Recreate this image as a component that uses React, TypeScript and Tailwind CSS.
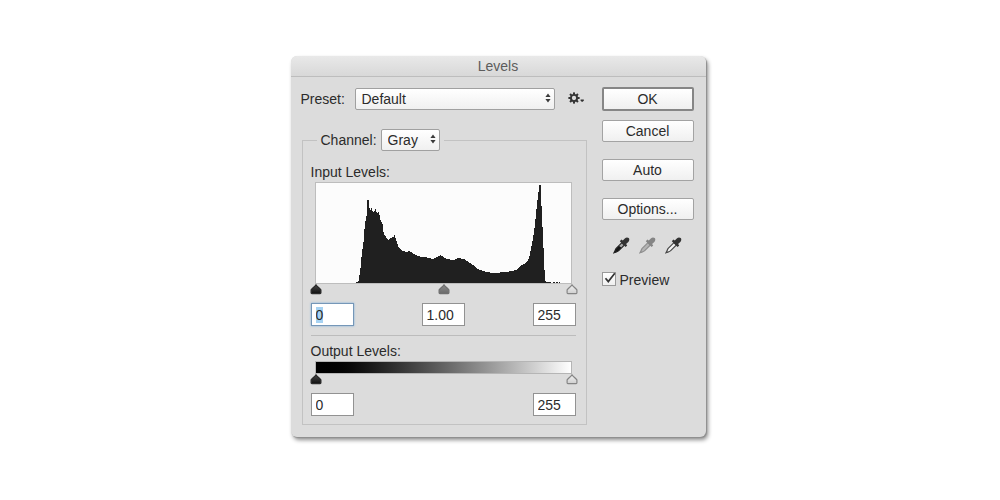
import { useEffect, useRef, useState } from 'react'
import type { ReactNode, RefObject } from 'react'
import clsx from 'clsx'

const PRESETS = ['Default', 'Darker', 'Increase Contrast 1', 'Lighten Shadows', 'Custom']
const CHANNELS = ['Gray']

// [level, height] pairs, joined by straight lines
const HISTOGRAM: Array<[number, number]> = [
  [40, 1], [42, 1], [43, 3], [45, 17], [46, 30], [48, 43], [49, 58], [51, 68], [51, 83], [53, 83],
  [53, 76], [55, 73], [56, 76], [57, 70], [59, 72], [60, 75], [61, 69], [63, 71], [65, 62],
  [67, 59], [68, 49], [71, 45], [73, 43], [75, 45], [78, 46], [79, 48], [81, 41], [83, 36], [87, 32],
  [91, 31], [94, 32], [97, 30], [102, 27], [106, 26], [110, 26], [117, 24], [122, 26], [125, 28],
  [131, 24], [139, 23], [143, 25], [149, 24], [153, 21], [159, 17], [162, 14], [171, 11],
  [178, 10], [191, 11], [201, 13], [205, 17], [212, 21], [214, 25], [216, 35], [218, 45],
  [220, 60], [222, 80], [223, 88], [224, 95], [224, 98], [226, 98], [226, 86], [227, 63], [228, 45],
  [229, 20], [230, 3], [231, 1], [236, 1],
]

type Tone = 'black' | 'gray' | 'white'

const THUMB: Record<Tone, { from: string; to: string; stroke: string }> = {
  black: { from: '#4a4a4a', to: '#101010', stroke: '#2a2a2a' },
  gray: { from: '#8c8c8c', to: '#6a6a6a', stroke: '#6f6f6f' },
  white: { from: '#f2f2f2', to: '#cfcfcf', stroke: '#858585' },
}

export default function App() {
  const [preset, setPreset] = useState('Default')
  const [channel, setChannel] = useState('Gray')
  const [shadows, setShadows] = useState('0')
  const [gamma, setGamma] = useState('1.00')
  const [highlights, setHighlights] = useState('255')
  const [outBlack, setOutBlack] = useState('0')
  const [outWhite, setOutWhite] = useState('255')
  const [preview, setPreview] = useState(true)
  const firstField = useRef<HTMLInputElement>(null)

  useEffect(() => {
    firstField.current?.focus()
    firstField.current?.select()
  }, [])

  return (
    <main className="flex min-h-screen items-start justify-center bg-white pt-14 pr-1 pb-14 font-['Liberation_Sans',Arial,sans-serif] text-sm leading-4 text-[#2b2b2b]">
      <form
        role="dialog"
        aria-labelledby="levels-title"
        onSubmit={(e) => e.preventDefault()}
        className="w-full max-w-[415px] rounded-md bg-[#dcdcdc] shadow-[1px_1px_1px_#8f8f8f,2px_3px_4px_rgba(0,0,0,0.45)]"
      >
        <header className="rounded-t-md border-b border-[#bdbdbd] bg-linear-to-b from-[#e9e9e9] to-[#d8d8d8] pt-0.5 pb-0.5">
          <h1 id="levels-title" className="text-center text-[#5c5c5c]">Levels</h1>
        </header>

        <div className="flex gap-[15px] pt-2.5 pr-3 pb-3 pl-2.5">
          <div className="min-w-0 flex-1">
            <div className="flex items-center pt-px">
              <label htmlFor="preset" className="w-[54px]">Preset:</label>
              <Dropdown id="preset" value={preset} options={PRESETS} onChange={setPreset} className="flex-1" />
              <button type="button" aria-label="Preset options" className="mr-0.5 ml-3">
                <GearIcon />
              </button>
            </div>

            <fieldset className="mt-[19px] ml-px border border-[#c2c2c2] pr-2.5 pb-2 pl-2">
              <legend className="ml-1.5 flex items-center gap-1 pr-1 pl-1">
                <label htmlFor="channel">Channel:</label>
                <Dropdown id="channel" value={channel} options={CHANNELS} onChange={setChannel} className="w-[59px]" />
              </legend>

              <h2 className="mt-[13px]">Input Levels:</h2>
              <div className="mt-0.5 mr-1 ml-1">
                <Histogram />
                <Slider
                  handles={[
                    { tone: 'black', label: 'Shadows', min: 0, max: 255, value: shadows, set: setShadows },
                    { tone: 'gray', label: 'Midtones', min: 0, max: 2, value: gamma, set: setGamma },
                    { tone: 'white', label: 'Highlights', min: 0, max: 255, value: highlights, set: setHighlights },
                  ]}
                />
              </div>
              <div className="mt-2 flex justify-between">
                <LevelField label="Shadow input level" value={shadows} onChange={setShadows} inputRef={firstField} />
                <LevelField label="Midtone input level" value={gamma} onChange={setGamma} />
                <LevelField label="Highlight input level" value={highlights} onChange={setHighlights} />
              </div>

              <hr className="mt-[9px] border-[#bcbcbc]" />

              <h2 className="mt-[7px]">Output Levels:</h2>
              <div className="mt-0.5 mr-1 ml-1">
                <div className="h-[13px] border border-[#b5b5b5] bg-linear-to-r from-black to-white" />
                <Slider
                  handles={[
                    { tone: 'black', label: 'Output black', min: 0, max: 255, value: outBlack, set: setOutBlack },
                    { tone: 'white', label: 'Output white', min: 0, max: 255, value: outWhite, set: setOutWhite },
                  ]}
                />
              </div>
              <div className="mt-2 flex justify-between">
                <LevelField label="Black output level" value={outBlack} onChange={setOutBlack} />
                <LevelField label="White output level" value={outWhite} onChange={setOutWhite} />
              </div>
            </fieldset>
          </div>

          <div className="flex w-[92px] flex-col">
            <DialogButton primary>OK</DialogButton>
            <DialogButton className="mt-[9px]">Cancel</DialogButton>
            <DialogButton className="mt-[17px]">Auto</DialogButton>
            <DialogButton className="mt-[17px]">Options...</DialogButton>

            <div className="mt-[17px] flex justify-between pr-3 pl-[11px]">
              <button type="button" aria-label="Set black point"><Dropper tone="black" /></button>
              <button type="button" aria-label="Set gray point"><Dropper tone="gray" /></button>
              <button type="button" aria-label="Set white point"><Dropper tone="white" /></button>
            </div>

            <label className="mt-[18px] flex items-start gap-1">
              <span className="relative size-[14px] shrink-0">
                <input
                  type="checkbox"
                  checked={preview}
                  onChange={(e) => setPreview(e.target.checked)}
                  className="block size-[14px] appearance-none border border-[#9a9a9a] bg-linear-to-b from-white to-[#efefef]"
                />
                {preview && (
                  <svg viewBox="0 0 14 14" className="pointer-events-none absolute inset-0 size-[14px] overflow-visible" fill="none">
                    <path d="M3.5 6.2 6.3 9.6 12.8 1.2" stroke="#333" strokeWidth="1.7" />
                  </svg>
                )}
              </span>
              Preview
            </label>
          </div>
        </div>
      </form>
    </main>
  )
}

function Dropdown({
  id,
  value,
  options,
  onChange,
  className,
}: {
  id: string
  value: string
  options: string[]
  onChange: (v: string) => void
  className?: string
}) {
  return (
    <div className={clsx('relative', className)}>
      <select
        id={id}
        value={value}
        onChange={(e) => onChange(e.target.value)}
        className="block h-[22px] w-full appearance-none rounded-xs border border-[#a0a0a0] bg-linear-to-b from-white to-[#f0f0f0] pl-1.5 leading-4"
      >
        {options.map((o) => <option key={o}>{o}</option>)}
      </select>
      <svg viewBox="0 0 6 10" className="pointer-events-none absolute top-[5px] right-1 h-2.5 w-1.5" fill="#3a3a3a">
        <path d="M3 .5 5.6 4H.4zM3 9.5.4 6h5.2z" />
      </svg>
    </div>
  )
}

function DialogButton({ primary, className, children }: { primary?: boolean; className?: string; children: ReactNode }) {
  return (
    <button
      type={primary ? 'submit' : 'button'}
      className={clsx(
        'w-full rounded-xs bg-linear-to-b from-white to-[#f0f0f0]',
        primary ? 'h-6 border-2 border-[#868686]' : 'h-[22px] border border-[#a3a3a3]',
        className
      )}
    >
      {children}
    </button>
  )
}

function LevelField({
  label,
  value,
  onChange,
  inputRef,
}: {
  label: string
  value: string
  onChange: (v: string) => void
  inputRef?: RefObject<HTMLInputElement | null>
}) {
  return (
    <input
      ref={inputRef}
      type="text"
      aria-label={label}
      value={value}
      onChange={(e) => onChange(e.target.value)}
      className="h-[23px] w-[43px] border border-[#929292] bg-white pl-1 outline-none selection:bg-[#a6d2f2] selection:text-[#2b2b2b] focus:border-[#7597b8] focus:shadow-[0_0_2px_#7fb0dc]"
    />
  )
}

type Handle = {
  tone: Tone
  label: string
  min: number
  max: number
  value: string
  set: (v: string) => void
}

function Slider({ handles }: { handles: Handle[] }) {
  return (
    <div className="relative ml-px h-[11px]">
      {handles.map((h) => (
        <div key={h.label}>
          <input
            type="range"
            aria-label={h.label}
            min={h.min}
            max={h.max}
            step={h.max === 2 ? 0.01 : 1}
            value={h.value}
            onChange={(e) => h.set(e.target.value)}
            className="pointer-events-none absolute inset-0 w-full opacity-0 [&::-webkit-slider-thumb]:pointer-events-auto"
          />
          <span
            className="pointer-events-none absolute top-0 -translate-x-1/2"
            style={{ left: `${((Number(h.value) - h.min) / (h.max - h.min)) * 100}%` }}
          >
            <Thumb tone={h.tone} />
          </span>
        </div>
      ))}
    </div>
  )
}

function Thumb({ tone }: { tone: Tone }) {
  const t = THUMB[tone]
  return (
    <svg viewBox="0 0 12 11" className="block h-[11px] w-3">
      <defs>
        <linearGradient id={`thumb-${tone}`} x1="0" y1="0" x2="0" y2="1">
          <stop offset="0" stopColor={t.from} />
          <stop offset="1" stopColor={t.to} />
        </linearGradient>
      </defs>
      <path
        d="M6 .8C7.2 2.4 9.6 4.4 10.9 5.9V8.8Q10.9 9.6 10.1 9.6H1.9Q1.1 9.6 1.1 8.8V5.9C2.4 4.4 4.8 2.4 6 .8Z"
        fill={`url(#thumb-${tone})`}
        stroke={t.stroke}
        strokeWidth="1.2"
      />
    </svg>
  )
}

function Histogram() {
  const points = HISTOGRAM.map(([x, h]) => `${x},${100 - h}`).join(' ')
  return (
    <div className="border border-[#bdbdbd] bg-[#fcfcfc]">
      <svg viewBox="0 0 256 100" preserveAspectRatio="none" className="block h-[100px] w-full" shapeRendering="crispEdges" fill="#202020">
        <polygon points={`40,100 ${points} 236,100`} />
        <path d="M238 99h2v1h-2zM241 99h2v1h-2zM244 99h1v1h-1z" />
      </svg>
    </div>
  )
}

function GearIcon() {
  const teeth = [0, 45, 90, 135, 180, 225, 270, 315]
  return (
    <svg viewBox="0 0 18 14" className="block h-3.5 w-[18px]" fill="#333">
      <circle cx="7" cy="6" r="3.1" fill="none" stroke="#333" strokeWidth="1.9" />
      {teeth.map((a) => (
        <rect key={a} x="6" y="0.4" width="2" height="2.2" transform={`rotate(${a} 7 6)`} />
      ))}
      <path d="M13.6 7.6h3.2v1L15.8 9.8h-1.2l-1-1.2z" />
    </svg>
  )
}

function Dropper({ tone }: { tone: Tone }) {
  const head = tone === 'gray' ? '#858585' : '#333'
  const tube = { black: '#151515', gray: '#b5b5b5', white: '#f4f4f4' }[tone]
  const outline = { black: '#222', gray: '#8e8e8e', white: '#484848' }[tone]
  return (
    <svg viewBox="0 0 17 17" className="block size-[17px]">
      <path
        d="M9 5.6 3.2 11.4C2.2 12.5 2.4 13.6 1 15.8 3.2 14.9 4.6 14.8 5.7 13.7L11.4 8Z"
        fill={tube}
        stroke={outline}
        strokeWidth="1.2"
      />
      {tone === 'black' && <path d="M8.8 6.4 6.2 9 8.2 10.4 10.6 8Z" fill="#aaa" />}
      <path
        d="M6.8 4.2 8.4 2.6 9.8 3.6 11.8 1.4C13.2.1 14.8.2 15.7 1.1 16.6 2.1 16.6 3.7 15.3 5L13.1 7 14.2 8.5 12.6 10.1Z"
        fill={head}
      />
    </svg>
  )
}
